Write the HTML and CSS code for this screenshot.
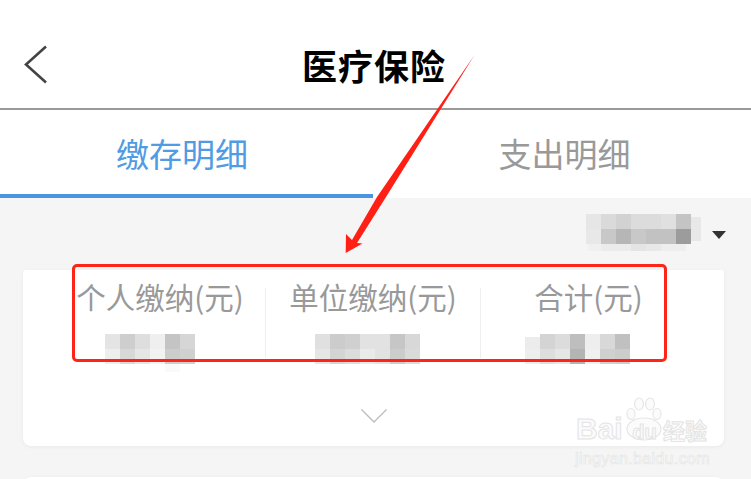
FILE: index.html
```html
<!DOCTYPE html>
<html lang="zh-CN">
<head>
    <meta charset="UTF-8">
    <meta name="viewport" content="width=device-width, initial-scale=1.0">
    <title>医疗保险</title>
    <link rel="stylesheet" href="styles.css">
</head>
<body>
    <div class="page">
        <header class="navbar">
            <svg class="back" width="24" height="40" viewBox="0 0 24 40">
                <path d="M22 1.5 L2 19.5 L22 37.5" fill="none" stroke="#444" stroke-width="2.6"/>
            </svg>
            <h1>医疗保险</h1>
        </header>

        <nav class="tabs">
            <div class="tab active">缴存明细</div>
            <div class="tab">支出明细</div>
        </nav>

        <main class="content">
            <div class="year-row">
                <svg class="mosaic" width="115" height="37" viewBox="0 0 115 37">
                    <rect x="0" y="0" width="15" height="15" fill="#e6e6e6"/>
                    <rect x="15" y="0" width="15" height="15" fill="#dadada"/>
                    <rect x="30" y="0" width="15" height="15" fill="#d2d2d2"/>
                    <rect x="45" y="0" width="30" height="15" fill="#dcdcdc"/>
                    <rect x="75" y="0" width="15" height="15" fill="#e0e0e0"/>
                    <rect x="90" y="0" width="15" height="15" fill="#c4c4c4"/>
                    <rect x="105" y="3" width="10" height="12" fill="#e8e8e8"/>
                    <rect x="0" y="15" width="15" height="15" fill="#e8e8e8"/>
                    <rect x="15" y="15" width="15" height="15" fill="#c8c8c8"/>
                    <rect x="30" y="15" width="15" height="15" fill="#b6b6b6"/>
                    <rect x="45" y="15" width="15" height="15" fill="#c8c8c8"/>
                    <rect x="60" y="15" width="30" height="15" fill="#c2c2c2"/>
                    <rect x="90" y="15" width="15" height="15" fill="#9c9c9c"/>
                    <rect x="105" y="15" width="10" height="12" fill="#e8e8e8"/>
                    <rect x="2" y="30" width="13" height="7" fill="#f0f0f0"/>
                    <rect x="15" y="30" width="30" height="7" fill="#ebebeb"/>
                    <rect x="45" y="30" width="15" height="7" fill="#e4e4e4"/>
                    <rect x="60" y="30" width="15" height="7" fill="#e8e8e8"/>
                    <rect x="75" y="30" width="25" height="7" fill="#eeeeee"/>
                </svg>
                <span class="caret"></span>
            </div>

            <section class="card">
                <div class="cols">
                    <div class="col">
                        <div class="label">个人缴纳(元)</div>
                        <svg class="mosaic" width="90" height="38" viewBox="0 0 90 38">
                            <rect x="0" y="0" width="15" height="15" fill="#e4e4e4"/>
                            <rect x="15" y="0" width="15" height="15" fill="#cecece"/>
                            <rect x="30" y="0" width="15" height="15" fill="#dedede"/>
                            <rect x="45" y="0" width="15" height="15" fill="#efefef"/>
                            <rect x="60" y="0" width="15" height="15" fill="#c4c4c4"/>
                            <rect x="75" y="0" width="15" height="15" fill="#d6d6d6"/>
                            <rect x="0" y="15" width="15" height="15" fill="#eeeeee"/>
                            <rect x="15" y="15" width="15" height="15" fill="#d8d8d8"/>
                            <rect x="30" y="15" width="15" height="15" fill="#e6e6e6"/>
                            <rect x="45" y="15" width="15" height="15" fill="#f2f2f2"/>
                            <rect x="60" y="15" width="15" height="15" fill="#cccccc"/>
                            <rect x="75" y="15" width="15" height="15" fill="#d0d0d0"/>
                            <rect x="60" y="30" width="15" height="8" fill="#fafafa"/>
                        </svg>
                    </div>
                    <div class="col">
                        <div class="label">单位缴纳(元)</div>
                        <svg class="mosaic" width="105" height="30" viewBox="0 0 105 30">
                            <rect x="0" y="0" width="15" height="15" fill="#e0e0e0"/>
                            <rect x="15" y="0" width="15" height="15" fill="#cccccc"/>
                            <rect x="30" y="0" width="15" height="15" fill="#d0d0d0"/>
                            <rect x="45" y="0" width="30" height="15" fill="#e2e2e2"/>
                            <rect x="75" y="0" width="15" height="15" fill="#c6c6c6"/>
                            <rect x="90" y="0" width="15" height="15" fill="#d8d8d8"/>
                            <rect x="0" y="15" width="15" height="15" fill="#e6e6e6"/>
                            <rect x="15" y="15" width="15" height="15" fill="#d4d4d4"/>
                            <rect x="30" y="15" width="15" height="15" fill="#dcdcdc"/>
                            <rect x="45" y="15" width="15" height="15" fill="#eaeaea"/>
                            <rect x="60" y="15" width="15" height="15" fill="#e2e2e2"/>
                            <rect x="75" y="15" width="15" height="15" fill="#cccccc"/>
                            <rect x="90" y="15" width="15" height="15" fill="#dadada"/>
                        </svg>
                    </div>
                    <div class="col">
                        <div class="label">合计(元)</div>
                        <svg class="mosaic" width="105" height="30" viewBox="0 0 105 30">
                            <rect x="0" y="3" width="15" height="12" fill="#ececec"/>
                            <rect x="15" y="0" width="15" height="15" fill="#d4d4d4"/>
                            <rect x="30" y="0" width="15" height="15" fill="#dcdcdc"/>
                            <rect x="45" y="0" width="15" height="15" fill="#bebebe"/>
                            <rect x="60" y="0" width="15" height="15" fill="#eeeeee"/>
                            <rect x="75" y="0" width="15" height="15" fill="#d8d8d8"/>
                            <rect x="90" y="0" width="15" height="15" fill="#c0c0c0"/>
                            <rect x="0" y="15" width="15" height="15" fill="#eeeeee"/>
                            <rect x="15" y="15" width="15" height="15" fill="#dedede"/>
                            <rect x="30" y="15" width="15" height="15" fill="#e6e6e6"/>
                            <rect x="45" y="15" width="15" height="15" fill="#b4b4b4"/>
                            <rect x="60" y="15" width="15" height="15" fill="#f0f0f0"/>
                            <rect x="75" y="15" width="15" height="15" fill="#d0d0d0"/>
                            <rect x="90" y="15" width="15" height="15" fill="#cccccc"/>
                        </svg>
                    </div>
                </div>
                <svg class="expand" width="26" height="16" viewBox="0 0 26 16">
                    <path d="M0.5 1.5 L13 14 L25.5 1.5" fill="none" stroke="#bdbdbd" stroke-width="1.4"/>
                </svg>
            </section>

            <section class="card next"></section>
        </main>

        <!-- annotation drawn on top of the screenshot -->
        <div class="red-box"></div>
        <svg class="arrow" width="751" height="479" viewBox="0 0 751 479">
            <polygon points="474.5,55 377,197 352,240 346,234 345.7,253 362.5,243.5 357,243 386,197" fill="#ff1f14"/>
        </svg>

        <div class="watermark">
            <svg class="paw" width="38" height="44" viewBox="0 0 38 44">
                <g fill="#fbfbfb" stroke="#e6e6e6" stroke-width="1.2">
                    <ellipse cx="6" cy="17" rx="4" ry="5.5"/>
                    <ellipse cx="14" cy="7" rx="4.5" ry="6"/>
                    <ellipse cx="25" cy="7" rx="4.5" ry="6"/>
                    <ellipse cx="32" cy="17" rx="4" ry="5.5"/>
                    <ellipse cx="19" cy="32" rx="17" ry="11"/>
                </g>
            </svg>
            <div class="wm-line"><span class="wm-bai">Bai</span><span class="wm-du">du</span><span class="wm-cn">经验</span></div>
            <div class="wm-url">jingyan.baidu.com</div>
        </div>
    </div>
</body>
</html>
```

FILE: styles.css
```css
* {
    box-sizing: border-box;
}
body {
    margin: 0;
    font-family: "Noto Sans CJK SC", "Noto Sans", sans-serif;
    background: #fff;
}
.page {
    position: relative;
    width: 751px;
    height: 479px;
    overflow: hidden;
    display: flex;
    flex-direction: column;
}
.navbar {
    position: relative;
    height: 110px;
    flex: none;
    display: flex;
    align-items: center;
    justify-content: center;
    padding-top: 20px;
    padding-right: 3px;
    background: #fff;
    border-bottom: 2px solid #999;
}
.navbar h1 {
    margin: 0;
    font-size: 35px;
    font-weight: 700;
    letter-spacing: 1px;
    color: #000;
}
.back {
    position: absolute;
    left: 24px;
    top: 45px;
}
.tabs {
    height: 88px;
    flex: none;
    display: flex;
    background: #fff;
}
.tab {
    flex: 1;
    padding-top: 19px;
    padding-left: 5px;
    text-align: center;
    font-size: 33px;
    line-height: 48px;
    color: #999;
}
.tab.active {
    flex: none;
    width: 373px;
    padding-left: 0;
    padding-right: 9px;
    color: #4f9be4;
    border-bottom: 4px solid #4a94e4;
}
.content {
    flex: 1;
    background: #f5f5f5;
    padding: 16px 27px 0 23px;
    display: flex;
    flex-direction: column;
}
.mosaic {
    display: block;
    flex: none;
}
.year-row {
    height: 56px;
    display: flex;
    align-items: flex-start;
    justify-content: flex-end;
}
.caret {
    width: 0;
    height: 0;
    margin: 17px -2px 0 11px;
    border-left: 7.5px solid transparent;
    border-right: 7.5px solid transparent;
    border-top: 8px solid #333;
}
.card {
    height: 176px;
    flex: none;
    background: #fff;
    border-radius: 2px 2px 8px 8px;
    box-shadow: 0 1px 4px rgba(0, 0, 0, 0.05);
    display: flex;
    flex-direction: column;
    align-items: center;
}
.card.next {
    margin-top: 31px;
    border-radius: 8px 8px 0 0;
}
.cols {
    width: 100%;
    padding: 18px 28px 0 28px;
    display: grid;
    grid-template-columns: repeat(3, 215px);
}
.col {
    height: 70px;
    display: flex;
    flex-direction: column;
    align-items: center;
    border-right: 1px solid #eee;
}
.col:last-child {
    border-right: none;
}
.label {
    margin-top: -13px;
    font-size: 29.5px;
    line-height: 42px;
    color: #999;
    white-space: nowrap;
}
.col:first-child .label {
    margin-left: 4px;
}
.col .mosaic {
    margin-top: 17px;
    margin-right: 16px;
}
.col:nth-child(2) .mosaic {
    margin-right: 12px;
}
.col:nth-child(3) .mosaic {
    margin-right: 22px;
}
.expand {
    margin-top: 50px;
}
.red-box {
    position: absolute;
    left: 72px;
    top: 264px;
    width: 595px;
    height: 98px;
    border: 3.5px solid #ff2418;
    border-radius: 5px;
}
.arrow {
    position: absolute;
    left: 0;
    top: 0;
}
.watermark {
    position: absolute;
    left: 576px;
    top: 397px;
    width: 136px;
    color: #fbfbfb;
    -webkit-text-stroke: 1px #e4e4e4;
}
.paw {
    position: absolute;
    left: 49px;
    top: 0;
}
.wm-line {
    position: relative;
    margin-top: 17px;
    display: flex;
    align-items: baseline;
    font-family: "Liberation Sans", sans-serif;
    font-size: 30px;
    font-weight: 700;
    line-height: 30px;
}
.wm-bai {
    width: 50px;
}
.wm-du {
    width: 37px;
    text-align: center;
    font-size: 20px;
}
.wm-cn {
    font-family: "Noto Sans CJK SC", sans-serif;
    font-size: 22px;
}
.wm-url {
    margin-top: 2px;
    margin-left: -1px;
    font-family: "Liberation Sans", sans-serif;
    font-size: 16px;
    line-height: 20px;
    letter-spacing: 0.35px;
    white-space: nowrap;
    -webkit-text-stroke: 0.6px #e4e4e4;
}
```
